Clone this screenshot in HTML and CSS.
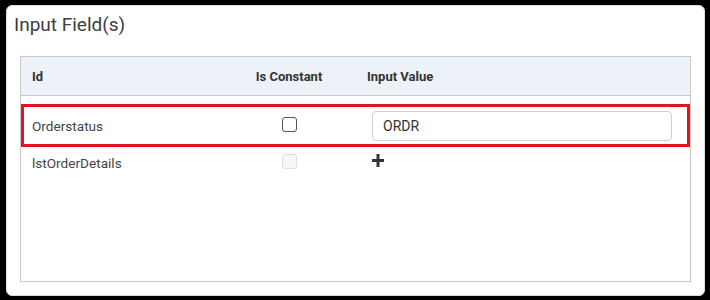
FILE: index.html
```html
<!DOCTYPE html>
<html lang="en">
<head>
    <meta charset="UTF-8">
    <meta name="viewport" content="width=device-width, initial-scale=1.0">
    <title>Input Field(s)</title>
    <link rel="stylesheet" href="styles.css">
</head>
<body>
    <div class="panel">
        <h2 class="panel_title">Input Field(s)</h2>
        <div class="field_table">
            <div class="row head">
                <div class="cell">Id</div>
                <div class="cell center">Is Constant</div>
                <div class="cell value_head">Input Value</div>
            </div>
            <div class="rows">
                <div class="row item selected">
                    <div class="cell">Orderstatus</div>
                    <div class="cell center"><input type="checkbox" class="check"></div>
                    <div class="cell value"><input type="text" class="text_input" value="ORDR"></div>
                </div>
                <div class="row item">
                    <div class="cell">lstOrderDetails</div>
                    <div class="cell center"><input type="checkbox" class="check" disabled></div>
                    <div class="cell value">
                        <svg class="plus" width="12" height="13" viewBox="0 0 12 13">
                            <rect x="0" y="5" width="12" height="3" fill="#333"/>
                            <rect x="4.5" y="0" width="3" height="13" fill="#333"/>
                        </svg>
                    </div>
                </div>
            </div>
        </div>
    </div>
</body>
</html>
```
FILE: styles.css
```css
* {
    margin: 0;
    padding: 0;
    box-sizing: border-box;
}
html, body {
    height: 100%;
}
body {
    background-color: #000;
    padding: 5px 5px 4px 6px;
    font-family: Roboto, "Liberation Sans", sans-serif;
    color: #333;
}
.panel {
    height: 100%;
    background-color: #fff;
    border: 1px solid #dcdcdc;
    border-radius: 6px;
    padding: 7px 13px 13px 13px;
    display: flex;
    flex-direction: column;
}
.panel_title {
    font-size: 19px;
    font-weight: 400;
    line-height: 24px;
    color: #3d3d3d;
    margin: 0 0 19px -6px;
}
.field_table {
    flex: 1;
    border: 1px solid #c8c8c8;
}
.row {
    display: grid;
    grid-template-columns: 203px 130px 1fr;
    align-items: center;
}
.head {
    height: 39px;
    background-color: #edf2f9;
    border-bottom: 1px solid #c8c8c8;
    font-size: 13px;
    font-weight: 700;
    color: #333;
}
.cell {
    padding-left: 11px;
}
.cell.center {
    padding-left: 0;
    text-align: center;
}
.head .value_head {
    padding-left: 13px;
}
.rows {
    padding-top: 8px;
}
.item {
    font-size: 13.6px;
    color: #444;
}
.item .cell {
    display: flex;
    align-items: center;
}
.item .cell.center {
    justify-content: center;
}
.item:nth-child(1) {
    height: 43px;
}
.item:nth-child(2) {
    height: 32px;
}
.selected {
    outline: 3px solid #e0151e;
    outline-offset: -3px;
}
.check {
    appearance: none;
    -webkit-appearance: none;
    width: 15px;
    height: 15px;
    margin: -3px 0 0 0;
    border: 1.5px solid #555;
    border-radius: 3px;
    background-color: #fff;
}
.check:disabled {
    border: 1px solid #dedede;
    background-color: #f7f7f7;
}
.cell.value {
    padding-left: 18px;
    padding-right: 19px;
}
.text_input {
    width: 300px;
    height: 30px;
    border: 1px solid #cfcfcf;
    border-radius: 4px;
    padding: 0 10px;
    font-family: Roboto, "Liberation Sans", sans-serif;
    font-size: 14px;
    color: #333;
    outline: none;
}
.plus {
    display: block;
    margin-top: -6px;
}
```
